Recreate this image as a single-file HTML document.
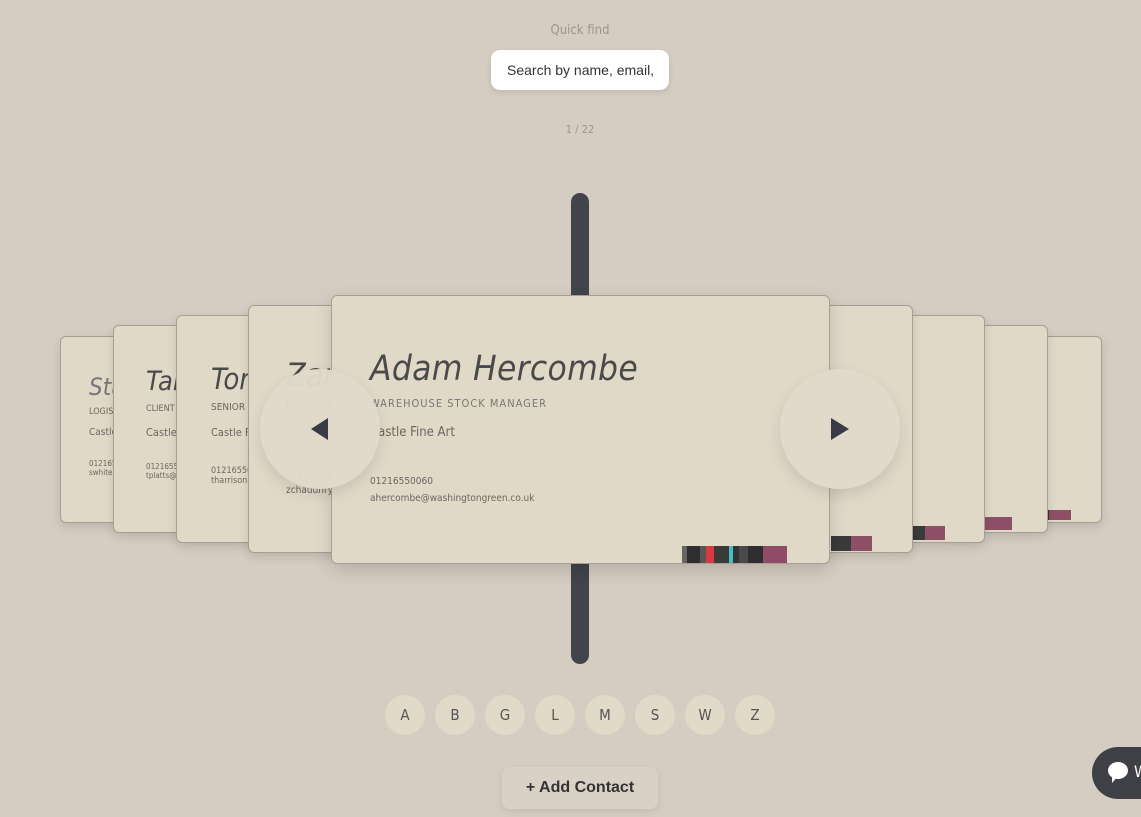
<!DOCTYPE html><html><head><style>
body{margin:0;width:1141px;height:817px;background:#d5cdc2;font-family:"DejaVu Sans Condensed","Liberation Sans",sans-serif;overflow:hidden;position:relative}
.a{position:absolute}
.card{position:absolute;background:#e1d9c8;border:1px solid #a89f92;border-radius:6px;box-shadow:0 4px 10px rgba(0,0,0,.12);overflow:hidden}
.nm{position:absolute;font-style:italic;color:#4a4a4a;white-space:nowrap}
.sm{position:absolute;color:#6a6660;white-space:nowrap}
.lt{position:absolute;width:40px;height:40px;border-radius:50%;background:#e2dac8;color:#555;font-size:15px;text-align:center;line-height:40px;top:695px}
</style></head><body>
<div class="a" style="left:0;width:1160px;top:23px;text-align:center;color:#9a958e;font-size:13px">Quick find</div>
<div class="a" style="left:491px;top:50px;width:178px;height:40px;background:#fff;border-radius:9px;box-shadow:0 2px 6px rgba(0,0,0,.1);font-family:'Liberation Sans',sans-serif;font-size:14px;color:#333;line-height:40px;text-indent:16px;white-space:nowrap;overflow:hidden">Search by name, email,</div>
<div class="a" style="left:0;width:1160px;top:123px;text-align:center;color:#9a958e;font-size:11px">1 / 22</div>
<div class="a" style="left:571px;top:193px;width:18px;height:471px;background:#42444c;border-radius:9px"></div>

<div class="card" style="left:60px;top:336px;width:200px;height:185px"><div class="nm" style="left:28px;top:36px;font-size:24px;color:#777">Stuart Whitehouse</div><div class="sm" style="left:28px;top:70px;font-size:9px">LOGISTICS MANAGER</div><div class="sm" style="left:28px;top:90px;font-size:10px">Castle Fine Art</div><div class="sm" style="left:28px;top:122px;font-size:8px">01216550060<br>swhitehouse@washington</div></div>
<div class="card" style="left:113px;top:325px;width:200px;height:206px"><div class="nm" style="left:32px;top:40px;font-size:27px">Tara Platts</div><div class="sm" style="left:32px;top:78px;font-size:9px">CLIENT ORDERS</div><div class="sm" style="left:32px;top:100px;font-size:11px">Castle Fine Art</div><div class="sm" style="left:32px;top:136px;font-size:8px">01216550060<br>tplatts@castlefineart.com</div></div>
<div class="card" style="left:176px;top:315px;width:200px;height:226px"><div class="nm" style="left:34px;top:46px;font-size:29px">Tom Harrison</div><div class="sm" style="left:34px;top:86px;font-size:10px">SENIOR MOUNTER</div><div class="sm" style="left:34px;top:110px;font-size:11px">Castle Fine Art</div><div class="sm" style="left:34px;top:150px;font-size:9px">01216550060<br>tharrison@castlefineart.com</div></div>
<div class="card" style="left:248px;top:305px;width:200px;height:246px"><div class="nm" style="left:37px;top:50px;font-size:32px">Zara Chaudhry</div><div class="sm" style="left:37px;top:94px;font-size:10px">LOGISTICS</div><div class="sm" style="left:37px;top:120px;font-size:12px">Castle Fine Art</div><div class="sm" style="left:37px;top:164px;font-size:10px;line-height:14px">01216550060<br>zchaudhry@castle</div></div>

<div class="card" style="left:1000px;top:336px;width:100px;height:185px"><div class="a" style="left:48px;bottom:2px;width:22px;height:10px;background:#8e5067"></div><div class="a" style="left:40px;bottom:2px;width:8px;height:10px;background:#333"></div></div>
<div class="card" style="left:940px;top:325px;width:106px;height:206px"><div class="a" style="left:43px;bottom:2px;width:28px;height:13px;background:#8e5067"></div><div class="a" style="left:33px;bottom:2px;width:10px;height:13px;background:#3a3a3a"></div></div>
<div class="card" style="left:880px;top:315px;width:103px;height:226px"><div class="a" style="left:44px;bottom:2px;width:20px;height:14px;background:#8e5067"></div><div class="a" style="left:30px;bottom:2px;width:14px;height:14px;background:#3a3a3a"></div></div>
<div class="card" style="left:800px;top:305px;width:111px;height:246px"><div class="a" style="left:50px;bottom:1px;width:21px;height:15px;background:#8e5067"></div><div class="a" style="left:30px;bottom:1px;width:20px;height:15px;background:#3a3a3a"></div></div>

<div class="card" style="left:331px;top:295px;width:497px;height:267px;box-shadow:0 6px 18px rgba(0,0,0,.15)">
<div class="nm" style="left:38px;top:53px;font-size:35px;letter-spacing:0.3px">Adam Hercombe</div>
<div class="sm" style="left:38px;top:101px;font-size:11px;letter-spacing:1px;color:#777">WAREHOUSE STOCK MANAGER</div>
<div class="sm" style="left:38px;top:129px;font-size:13px">Castle Fine Art</div>
<div class="sm" style="left:38px;top:177px;font-size:10px;line-height:17px">01216550060<br>ahercombe@washingtongreen.co.uk</div>
<div class="a" style="left:350px;bottom:0;height:17px;width:105px;display:flex"><i style="flex:5;background:#666"></i><i style="flex:12;background:#2e2e2e"></i><i style="flex:5;background:#555"></i><i style="flex:8;background:#d83a40"></i><i style="flex:13;background:#3a3a3a"></i><i style="flex:4;background:#48bcc4"></i><i style="flex:6;background:#333"></i><i style="flex:8;background:#4a4a4a"></i><i style="flex:14;background:#2e2e2e"></i><i style="flex:22;background:#8e4c66"></i></div>
</div>

<div class="a" style="left:260px;top:369px;width:120px;height:120px;border-radius:50%;background:#e2dacb;opacity:.96;box-shadow:0 6px 16px rgba(0,0,0,.12)"></div>
<div class="a" style="left:311px;top:418px;width:0;height:0;border-top:11px solid transparent;border-bottom:11px solid transparent;border-right:17px solid #383a44"></div>
<div class="a" style="left:780px;top:369px;width:120px;height:120px;border-radius:50%;background:#e2dacb;opacity:.96;box-shadow:0 6px 16px rgba(0,0,0,.12)"></div>
<div class="a" style="left:831px;top:418px;width:0;height:0;border-top:11px solid transparent;border-bottom:11px solid transparent;border-left:18px solid #383a44"></div>

<div class="lt" style="left:385px">A</div><div class="lt" style="left:435px">B</div><div class="lt" style="left:485px">G</div><div class="lt" style="left:535px">L</div><div class="lt" style="left:585px">M</div><div class="lt" style="left:635px">S</div><div class="lt" style="left:685px">W</div><div class="lt" style="left:735px">Z</div>

<div class="a" style="left:502px;top:767px;width:156px;height:42px;border-radius:8px;background:#d9d1c5;box-shadow:0 3px 8px rgba(0,0,0,.08);font-family:'Liberation Sans',sans-serif;font-weight:bold;font-size:16px;color:#333;text-align:center;line-height:42px">+ Add Contact</div>
<div class="a" style="left:1092px;top:747px;width:80px;height:52px;border-radius:26px;background:#3f4045"></div>
<div class="a" style="left:1108px;top:762px;width:20px;height:17px;border-radius:50%;background:#fff"></div>
<div class="a" style="left:1112px;top:776px;width:0;height:0;border-top:7px solid #fff;border-right:6px solid transparent"></div>
<div class="a" style="left:1134px;top:762px;color:#fff;font-size:16px">W</div>
</body></html>
